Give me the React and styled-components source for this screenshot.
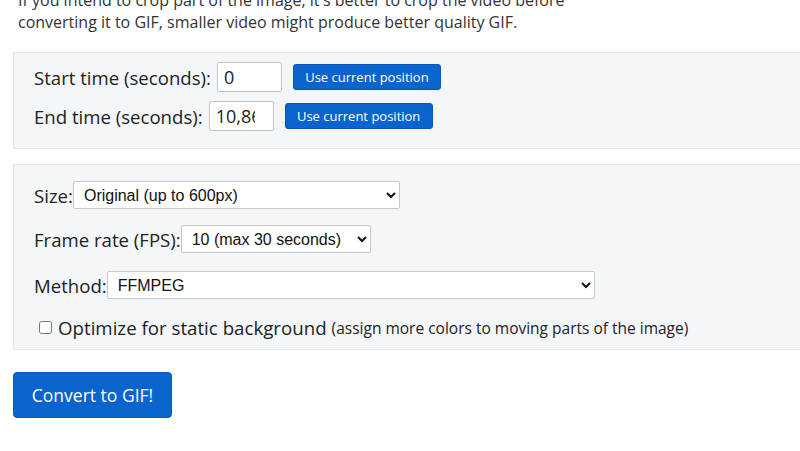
import React from "react";
import styled, { createGlobalStyle } from "styled-components";

const GlobalStyle = createGlobalStyle`
  body {
    margin: 0;
    background: #fff;
    font-family: "Open Sans", "Noto Sans", sans-serif;
    color: #222;
    overflow: hidden;
  }
`;

const Page = styled.div`
  padding: 0 0 0 13px;
`;

const Intro = styled.p`
  margin: -11px 0 0 5px;
  font-size: 16px;
  line-height: 22px;
  color: #333;
`;

const Panel = styled.fieldset`
  margin: ${(p) => p.$top}px -20px 0 0;
  padding: ${(p) => p.$pad};
  background: #f4f7fa;
  border: 1px solid #e4e7ea;
  border-right: none;
  display: flex;
  flex-direction: column;
  gap: ${(p) => p.$gap}px;
  min-width: 0;
`;

const Row = styled.div`
  display: flex;
  align-items: center;
  font-size: 18.6px;
  white-space: nowrap;
  margin-top: ${(p) => p.$push || 0}px;
`;

const Label = styled.label`
  margin-right: ${(p) => p.$space || 0}px;
`;

const TimeInput = styled.input`
  width: 65px;
  height: 30px;
  box-sizing: border-box;
  border: 1px solid #c4c4c4;
  border-radius: 2px;
  padding: 0 18px 0 6px;
  font-family: "Open Sans", sans-serif;
  font-size: 18px;
  color: #222;
  background: #fff;
  margin-right: 11px;
`;

const SmallButton = styled.button`
  width: 148px;
  height: 26px;
  border: 1px solid #0a56bb;
  border-radius: 3px;
  background: #0b63ce;
  color: #fff;
  font-family: "Open Sans", sans-serif;
  font-size: 13px;
  padding: 0;
  cursor: pointer;
`;

const Select = styled.select`
  width: ${(p) => p.$w}px;
  height: 28px;
  border: 1px solid #c8c8c8;
  border-radius: 2px;
  background: #fff;
  font-family: "Liberation Sans", Arial, sans-serif;
  font-size: 16px;
  color: #111;
  padding: 0 4px 0 6px;
`;

const CheckRow = styled.label`
  display: flex;
  align-items: center;
  font-size: 18.7px;
  margin: 0 0 0 5px;
  white-space: nowrap;

  input {
    width: 13px;
    height: 13px;
    margin: 0 6px 0 0;
  }

  small {
    font-size: 15.5px;
    margin-left: 5px;
  }
`;

const ConvertButton = styled.button`
  margin-top: 22px;
  width: 159px;
  height: 46px;
  border: 1px solid #0a56bb;
  border-radius: 4px;
  background: #0b63ce;
  color: #fff;
  font-family: "Open Sans", sans-serif;
  font-size: 17.5px;
  cursor: pointer;
`;

export default function App() {
  return (
    <>
      <GlobalStyle />
      <Page>
        <Intro>
          If you intend to crop part of the image, it's better to crop the video before
          <br />
          converting it to GIF, smaller video might produce better quality GIF.
        </Intro>
        <Panel $top={19} $pad="9px 20px 17px" $gap={9}>
          <Row>
            <Label $space={6}>Start time (seconds):</Label>
            <TimeInput defaultValue="0" />
            <SmallButton>Use current position</SmallButton>
          </Row>
          <Row>
            <Label $space={6}>End time (seconds):</Label>
            <TimeInput defaultValue="10,86" />
            <SmallButton>Use current position</SmallButton>
          </Row>
        </Panel>
        <Panel $top={15} $pad="16px 20px 9px" $gap={16}>
          <Row>
            <Label>Size:</Label>
            <Select $w={327}>
              <option>Original (up to 600px)</option>
            </Select>
          </Row>
          <Row>
            <Label>Frame rate (FPS):</Label>
            <Select $w={190}>
              <option>10 (max 30 seconds)</option>
            </Select>
          </Row>
          <Row $push={2}>
            <Label>Method:</Label>
            <Select $w={488}>
              <option>FFMPEG</option>
            </Select>
          </Row>
          <CheckRow>
            <input type="checkbox" />
            Optimize for static background
            <small>(assign more colors to moving parts of the image)</small>
          </CheckRow>
        </Panel>
        <ConvertButton>Convert to GIF!</ConvertButton>
      </Page>
    </>
  );
}
